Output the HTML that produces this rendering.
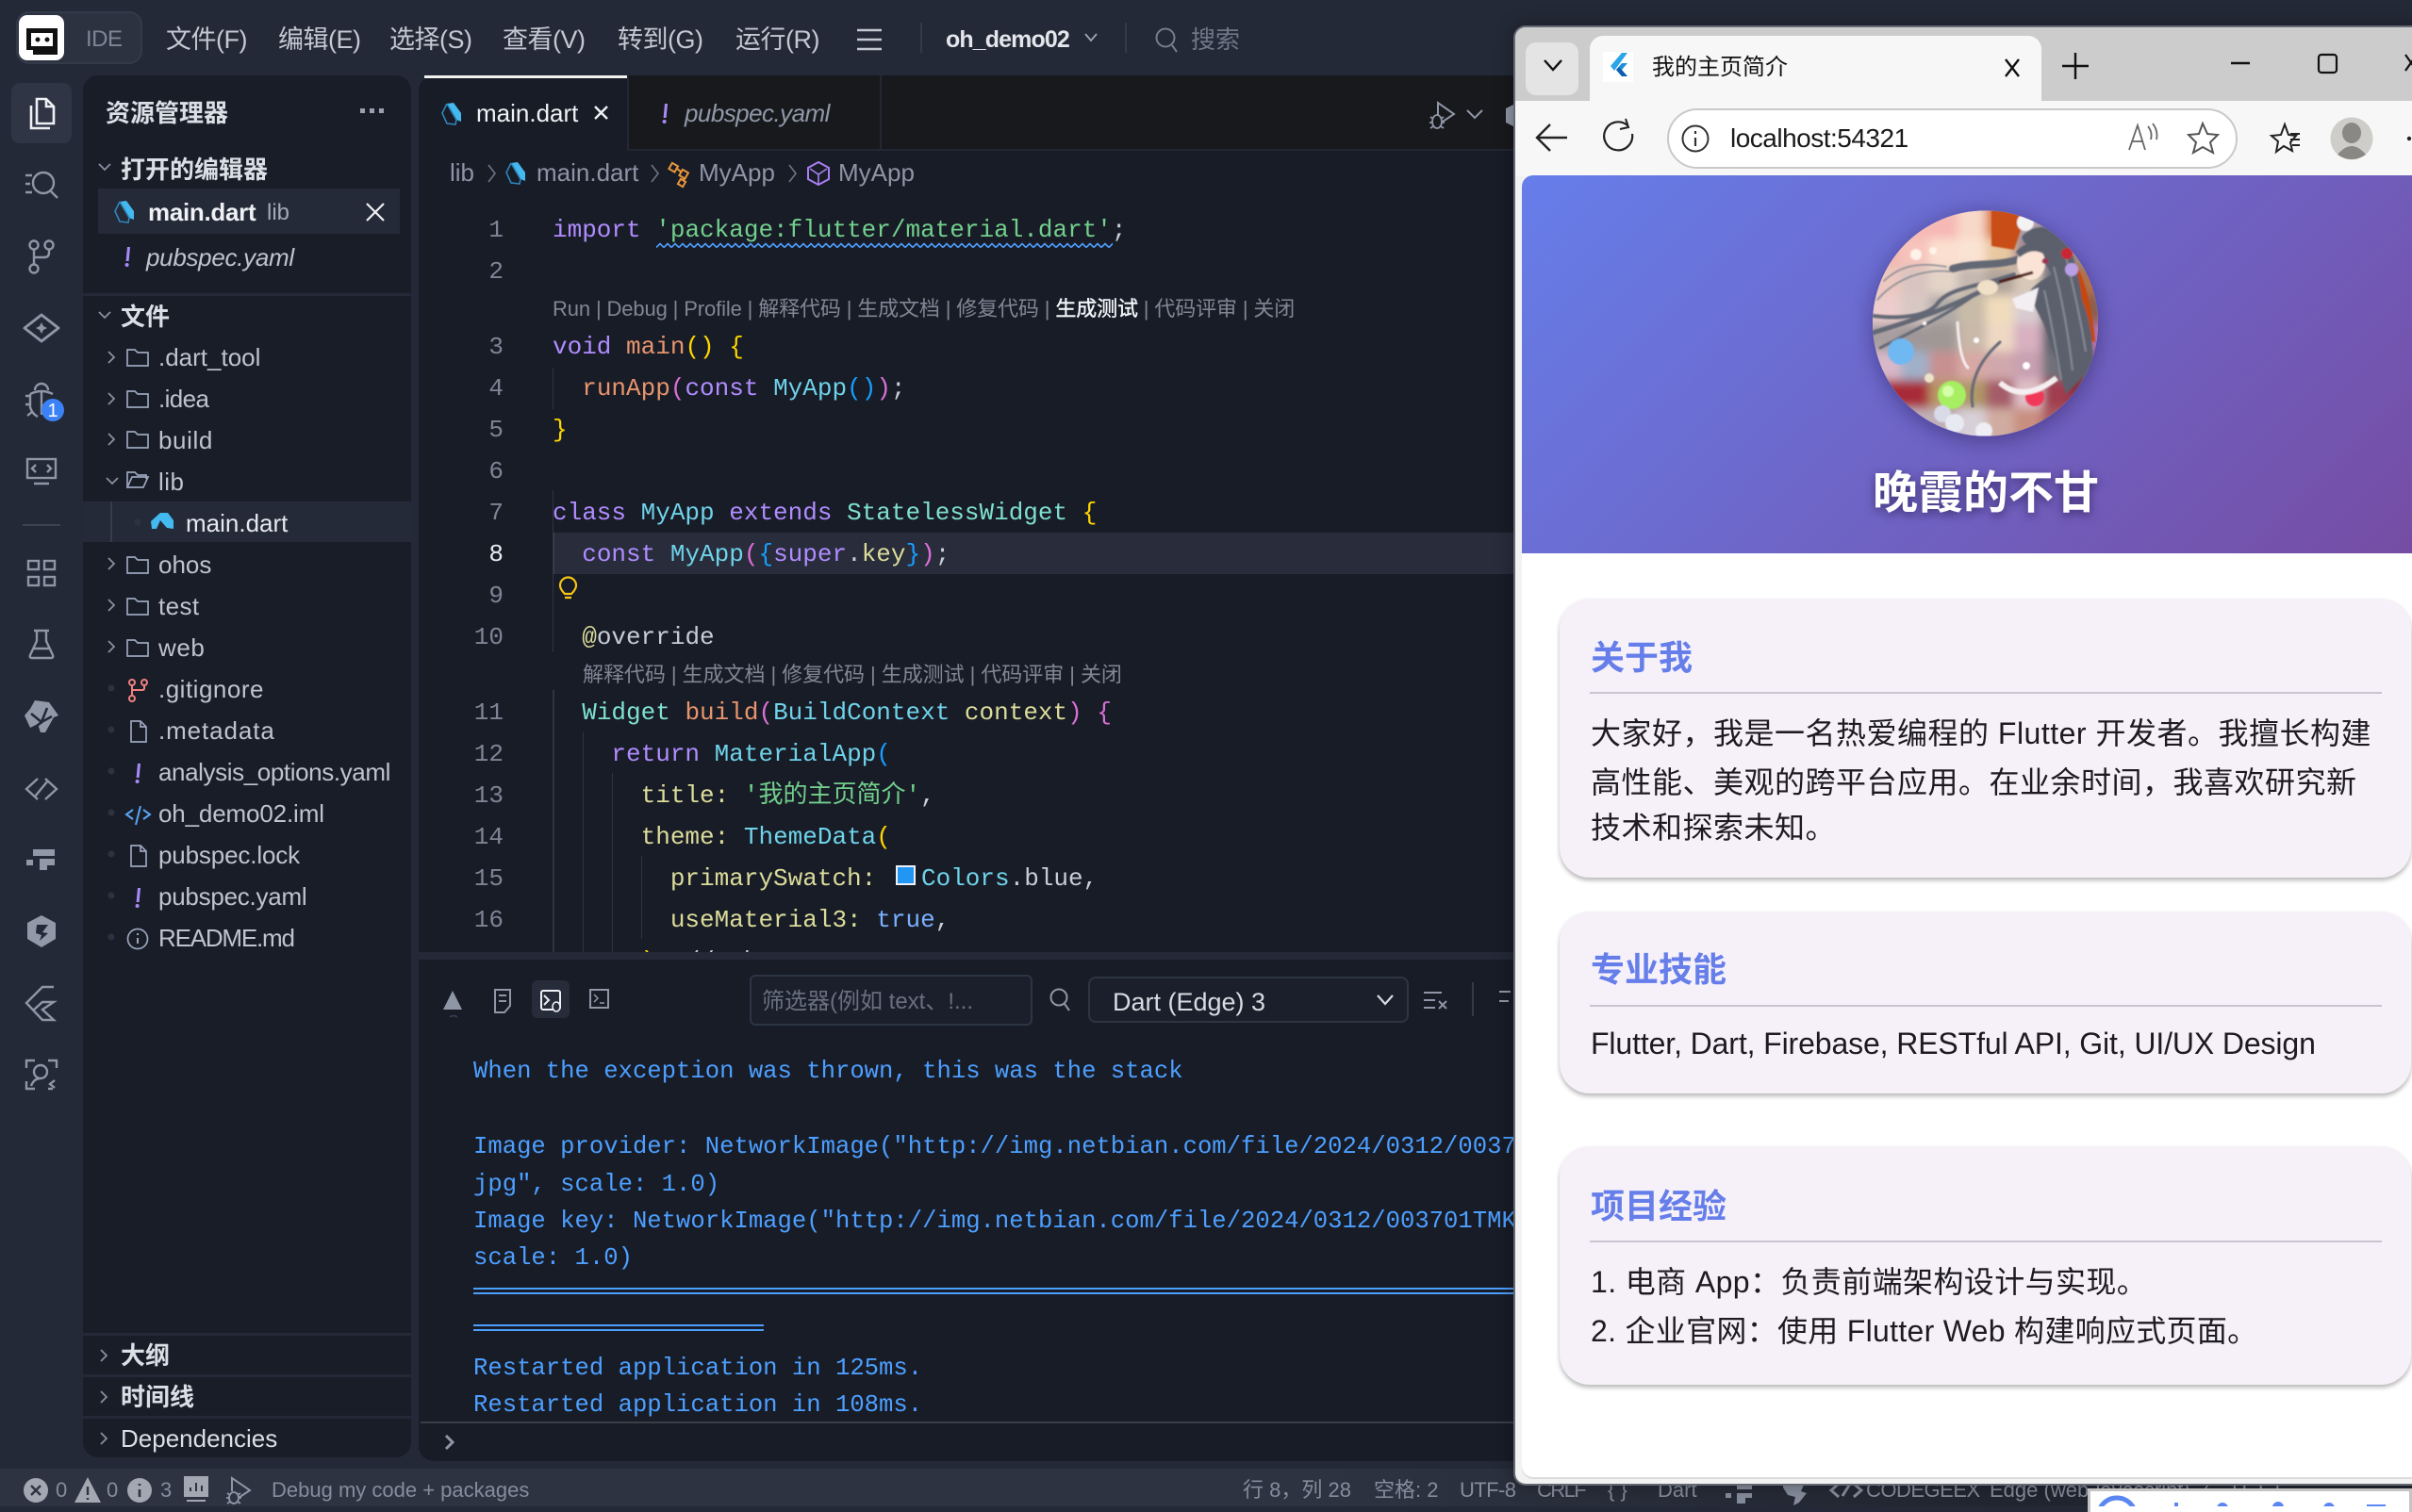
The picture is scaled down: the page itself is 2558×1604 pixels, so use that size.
<!DOCTYPE html>
<html lang="zh"><head><meta charset="utf-8"><title>IDE</title>
<style>
html,body{margin:0;padding:0;background:#232936}
body{position:relative;width:2558px;height:1598px;overflow:hidden;font-family:"Liberation Sans","Noto Sans CJK SC",sans-serif;color:#c0c4d0}
.a{position:absolute}
.t{position:absolute;line-height:0;white-space:pre;height:0}
.m{font-size:27px;letter-spacing:-.5px;color:#c4c8d2;top:42px}
.r{font-size:26px;color:#bfc3ce;left:168px}
.h{font-size:26px;font-weight:700;color:#dcdfe6}
.bc{font-size:26px;color:#8d94a5;top:183px}
.ln{font:26px/0 "Liberation Mono",monospace;color:#7d8595;left:480px;width:54px;text-align:right;margin-top:2px}
.c{font:26px/0 "Liberation Mono","Noto Sans CJK SC",monospace;color:#c8ccd6;margin-top:2px}
.lens{font-size:22px;color:#808694}
.o{font:25.6px/0 "Liberation Mono",monospace;color:#4d9fff;left:502px;margin-top:3px}
.st{font-size:22px;color:#858c9c;top:1581px}
.k{color:#b08cff}.s{color:#72cf8c}.f{color:#e8956d}.n{color:#6fd3ea}.tl{color:#7fe0d0}.y{color:#ffd700}.g{color:#da70d6}.b{color:#179fff}.v{color:#dcdc9a}.tr{color:#7ab0ff}
.card{position:absolute;left:1654px;width:903px;background:#f6f1f9;border-radius:32px;box-shadow:0 3px 5px rgba(0,0,0,.28)}
.ct{font-size:36px;font-weight:700;color:#667eea;left:1687px}
.dv{position:absolute;left:1686px;width:840px;height:2px;background:#cac4d0}
.bd{font-size:32px;color:#1d1b20;left:1687px;letter-spacing:.5px;font-family:"Liberation Sans","Noto Sans CJK SC",sans-serif}
</style></head><body>

<!-- panels -->
<div class="a" style="left:17px;top:12px;width:130px;height:52px;border:2px solid #333a4a;border-radius:14px;background:#2c3240"></div>
<div class="a" style="left:20px;top:16px;width:48px;height:48px;background:#fff;border-radius:9px"></div>
<div class="a" style="left:88px;top:80px;width:348px;height:1466px;background:#191d28;border-radius:16px"></div>
<div class="a" style="left:444px;top:80px;width:1200px;height:930px;background:#181c27;border-radius:16px 0 0 0"></div>
<div class="a" style="left:666px;top:80px;width:960px;height:78px;background:#18191c"></div>
<div class="a" style="left:666px;top:158px;width:960px;height:2px;background:#232733"></div>
<div class="a" style="left:665px;top:80px;width:2px;height:80px;background:#232733"></div>
<div class="a" style="left:933px;top:80px;width:2px;height:78px;background:#232733"></div>
<div class="a" style="left:450px;top:80px;width:215px;height:3px;background:#f2f2f2"></div>
<div class="a" style="left:444px;top:1018px;width:1200px;height:532px;background:#181c27;border-radius:0 0 0 16px"></div>
<div class="a" style="left:0;top:1558px;width:2558px;height:40px;background:linear-gradient(90deg,#2d3341 0,#2d3341 55%,#20252f 85%)"></div>

<!-- sidebar rects -->
<div class="a" style="left:12px;top:88px;width:64px;height:64px;background:#2f3545;border-radius:9px"></div>
<div class="a" style="left:104px;top:200px;width:320px;height:48px;background:#242a38"></div>
<div class="a" style="left:88px;top:311px;width:348px;height:3px;background:#232936"></div>
<div class="a" style="left:88px;top:532px;width:348px;height:43px;background:#242a38"></div>
<div class="a" style="left:117px;top:532px;width:2px;height:43px;background:#353c4c"></div>
<div class="a" style="left:88px;top:1414px;width:348px;height:3px;background:#232936"></div>
<div class="a" style="left:88px;top:1458px;width:348px;height:3px;background:#232936"></div>
<div class="a" style="left:88px;top:1502px;width:348px;height:3px;background:#232936"></div>

<!-- title bar text -->
<div class="t" style="left:91px;top:42px;font-size:24px;color:#7e8595;letter-spacing:-.5px">IDE</div>
<div class="t m" style="left:176px">文件(F)</div>
<div class="t m" style="left:295px">编辑(E)</div>
<div class="t m" style="left:413px">选择(S)</div>
<div class="t m" style="left:533px">查看(V)</div>
<div class="t m" style="left:655px">转到(G)</div>
<div class="t m" style="left:780px">运行(R)</div>
<div class="t" style="left:1003px;top:42px;font-size:25px;font-weight:700;color:#e4e6ec;letter-spacing:-.9px">oh_demo02</div>
<div class="t" style="left:1263px;top:42px;font-size:26px;color:#6f7686">搜索</div>

<!-- sidebar text -->
<div class="t h" style="left:112px;top:120px">资源管理器</div>
<div class="t h" style="left:128px;top:180px">打开的编辑器</div>
<div class="t" style="left:157px;top:225px;font-size:26px;font-weight:700;color:#f0f1f4;letter-spacing:-.3px">main.dart</div>
<div class="t" style="left:283px;top:226px;font-size:24px;color:#a4a9b6">lib</div>
<div class="t" style="left:155px;top:273px;font-size:26px;font-style:italic;color:#bfc3ce;letter-spacing:-.3px">pubspec.yaml</div>
<div class="t h" style="left:128px;top:336px">文件</div>
<div class="t r" style="top:379px">.dart_tool</div>
<div class="t r" style="top:423px;letter-spacing:-.6px">.idea</div>
<div class="t r" style="top:467px;letter-spacing:.6px">build</div>
<div class="t r" style="top:511px;letter-spacing:.5px">lib</div>
<div class="t r" style="top:555px;left:197px;color:#e6e8ee">main.dart</div>
<div class="t r" style="top:599px">ohos</div>
<div class="t r" style="top:643px;letter-spacing:.4px">test</div>
<div class="t r" style="top:687px;letter-spacing:.6px">web</div>
<div class="t r" style="top:731px;letter-spacing:.5px">.gitignore</div>
<div class="t r" style="top:775px;letter-spacing:.9px">.metadata</div>
<div class="t r" style="top:819px;letter-spacing:-.4px">analysis_options.yaml</div>
<div class="t r" style="top:863px;letter-spacing:-.15px">oh_demo02.iml</div>
<div class="t r" style="top:907px;letter-spacing:-.15px">pubspec.lock</div>
<div class="t r" style="top:951px;letter-spacing:-.25px">pubspec.yaml</div>
<div class="t r" style="top:995px;letter-spacing:-1.2px">README.md</div>
<div class="t h" style="left:128px;top:1438px">大纲</div>
<div class="t h" style="left:128px;top:1482px">时间线</div>
<div class="t" style="left:128px;top:1526px;font-size:26px;color:#dcdfe6">Dependencies</div>

<!-- tabs + breadcrumb -->
<div class="t" style="left:505px;top:120px;font-size:26px;color:#f0f1f4">main.dart</div>
<div class="t" style="left:726px;top:120px;font-size:26px;font-style:italic;color:#8f97a8;letter-spacing:-.55px">pubspec.yaml</div>
<div class="t bc" style="left:477px">lib</div>
<div class="t bc" style="left:569px">main.dart</div>
<div class="t bc" style="left:741px">MyApp</div>
<div class="t bc" style="left:889px">MyApp</div>

<!-- editor -->
<div class="a" style="left:586px;top:565px;width:1030px;height:44px;background:#282c3b"></div>
<div class="a" style="left:586px;top:390px;width:1px;height:44px;background:#2e3442"></div>
<div class="a" style="left:586px;top:565px;width:2px;height:44px;background:#3a4150"></div>
<div class="a" style="left:586px;top:520px;width:1px;height:172px;background:#2e3442"></div>
<div class="a" style="left:586px;top:732px;width:2px;height:278px;background:#2e3442"></div>
<div class="a" style="left:618px;top:776px;width:1px;height:234px;background:#2e3442"></div>
<div class="a" style="left:649px;top:820px;width:1px;height:190px;background:#2e3442"></div>
<div class="a" style="left:680px;top:908px;width:1px;height:88px;background:#2e3442"></div>

<div class="a" style="left:0;top:0;width:2558px;height:1598px;clip-path:inset(0 0 588px 0)">
<div class="t ln" style="top:242px">1</div>
<div class="t ln" style="top:286px">2</div>
<div class="t ln" style="top:366px">3</div>
<div class="t ln" style="top:410px">4</div>
<div class="t ln" style="top:454px">5</div>
<div class="t ln" style="top:498px">6</div>
<div class="t ln" style="top:542px">7</div>
<div class="t ln" style="top:586px;color:#e8eaf0">8</div>
<div class="t ln" style="top:630px">9</div>
<div class="t ln" style="top:674px">10</div>
<div class="t ln" style="top:754px">11</div>
<div class="t ln" style="top:798px">12</div>
<div class="t ln" style="top:842px">13</div>
<div class="t ln" style="top:886px">14</div>
<div class="t ln" style="top:930px">15</div>
<div class="t ln" style="top:974px">16</div>
<div class="t ln" style="top:1018px">17</div>

<div class="t c" style="left:586px;top:242px"><span class="k">import</span> <span class="s">'package:flutter/material.dart'</span>;</div>
<div class="t lens" style="left:586px;top:328px;letter-spacing:-.13px">Run | Debug | Profile | 解释代码 | 生成文档 | 修复代码 | <span style="color:#f2f4f8;-webkit-text-stroke:.4px #f2f4f8">生成测试</span> | 代码评审 | 关闭</div>
<div class="t c" style="left:586px;top:366px"><span class="k">void</span> <span class="f">main</span><span class="y">()</span> <span class="y">{</span></div>
<div class="t c" style="left:586px;top:410px">  <span class="f">runApp</span><span class="g">(</span><span class="k">const</span> <span class="n">MyApp</span><span class="b">()</span><span class="g">)</span>;</div>
<div class="t c" style="left:586px;top:454px"><span class="y">}</span></div>
<div class="t c" style="left:586px;top:542px"><span class="k">class</span> <span class="n">MyApp</span> <span class="k">extends</span> <span class="tl">StatelessWidget</span> <span class="y">{</span></div>
<div class="t c" style="left:586px;top:586px">  <span class="k">const</span> <span class="n">MyApp</span><span class="g">(</span><span class="b">{</span><span class="k">super</span>.<span class="v">key</span><span class="b">}</span><span class="g">)</span>;</div>
<div class="t c" style="left:586px;top:674px">  <span class="v">@</span>override</div>
<div class="t lens" style="left:618px;top:716px;letter-spacing:-.05px">解释代码 | 生成文档 | 修复代码 | 生成测试 | 代码评审 | 关闭</div>
<div class="t c" style="left:586px;top:754px">  <span class="tl">Widget</span> <span class="f">build</span><span class="g">(</span><span class="n">BuildContext</span> <span class="v">context</span><span class="g">)</span> <span class="g">{</span></div>
<div class="t c" style="left:586px;top:798px">    <span class="k">return</span> <span class="n">MaterialApp</span><span class="b">(</span></div>
<div class="t c" style="left:586px;top:842px">      <span class="v">title:</span> <span class="s">'我的主页简介'</span>,</div>
<div class="t c" style="left:586px;top:886px">      <span class="v">theme:</span> <span class="n">ThemeData</span><span class="y">(</span></div>
<div class="t c" style="left:586px;top:930px">        <span class="v">primarySwatch:</span></div>
<div class="a" style="left:950px;top:918px;width:17px;height:17px;background:#2196f3;border:2px solid #eef0f5"></div>
<div class="t c" style="left:977px;top:930px"><span class="n">Colors</span>.blue,</div>
<div class="t c" style="left:586px;top:974px">        <span class="v">useMaterial3:</span> <span class="tr">true</span>,</div>
<div class="t c" style="left:586px;top:1018px">      <span class="y">)</span>, // ThemeData</div>
</div>

<!-- panel toolbar -->
<div class="a" style="left:564px;top:1040px;width:40px;height:40px;background:#262c3a;border-radius:6px"></div>
<div class="a" style="left:795px;top:1034px;width:296px;height:50px;border:2px solid #2d3444;border-radius:6px;background:#1b1f2b"></div>
<div class="t" style="left:808px;top:1063px;font-size:24px;color:#687080">筛选器(例如 text、!...</div>
<div class="a" style="left:1154px;top:1036px;width:336px;height:45px;border:2px solid #2d3444;border-radius:8px;background:#1b1f2b"></div>
<div class="t" style="left:1180px;top:1063px;font-size:27px;color:#d8dbe2">Dart (Edge) 3</div>

<!-- output -->
<div class="t o" style="top:1134px">When the exception was thrown, this was the stack</div>
<div class="t o" style="top:1214px">Image provider: NetworkImage("http://img.netbian.com/file/2024/0312/003701TMKV4.</div>
<div class="t o" style="top:1254px">jpg", scale: 1.0)</div>
<div class="t o" style="top:1293px">Image key: NetworkImage("http://img.netbian.com/file/2024/0312/003701TMKV4.jpg",</div>
<div class="t o" style="top:1332px">scale: 1.0)</div>
<div class="a" style="left:502px;top:1366px;width:1110px;height:2px;background:#4d9fff"></div>
<div class="a" style="left:502px;top:1371px;width:1110px;height:2px;background:#4d9fff"></div>
<div class="a" style="left:502px;top:1405px;width:308px;height:2px;background:#4d9fff"></div>
<div class="a" style="left:502px;top:1410px;width:308px;height:2px;background:#4d9fff"></div>
<div class="t o" style="top:1449px">Restarted application in 125ms.</div>
<div class="t o" style="top:1488px">Restarted application in 108ms.</div>
<div class="a" style="left:446px;top:1508px;width:1170px;height:2px;background:#3a3e49"></div>

<!-- status text -->
<div class="t st" style="left:59px">0</div>
<div class="t st" style="left:113px">0</div>
<div class="t st" style="left:170px">3</div>
<div class="t st" style="left:288px">Debug my code + packages</div>
<div class="t st" style="left:1318px">行 8，列 28</div>
<div class="t st" style="left:1457px">空格: 2</div>
<div class="t st" style="left:1548px;letter-spacing:-.6px">UTF-8</div>
<div class="t st" style="left:1630px;letter-spacing:-1.6px">CRLF</div>
<div class="t st" style="left:1705px">{ }</div>
<div class="t st" style="left:1758px">Dart</div>
<div class="t st" style="left:1979px;letter-spacing:-.5px">CODEGEEX</div>
<div class="t st" style="left:2110px">Edge (web-javascript)</div>
<div class="t st" style="left:2330px;letter-spacing:8px">✓ UTF</div>

<!-- icons layer -->
<svg class="a" style="left:0;top:0" width="2558" height="1598" viewBox="0 0 2558 1598" fill="none">
<defs>
<g id="dart"><path d="M7 2 L14 1 L22 12 L22 21 L17 19 Z" fill="#44b9f0"/><path d="M7 2 L2 12 L7 23 L16 24 L17 19 L7 2" stroke="#2f86bc" stroke-width="1.6"/></g>
<g id="folder"><path d="M1 2h8l3 3h11v14H1z" stroke="#9aa5bd" stroke-width="1.7"/></g>
<g id="file"><path d="M2 1h10l6 6v16H2z M12 1v6h6" stroke="#9aa5bd" stroke-width="1.7"/></g>
<g id="cr"><path d="M1 1l6 6-6 6" stroke="#8a90a0" stroke-width="1.8"/></g>
<g id="cd"><path d="M1 1l6 6 6-6" stroke="#8a90a0" stroke-width="1.8"/></g>
<g id="ex"><path d="M5 1l-1.4 15h3L8 1z" fill="#a78bfa"/><circle cx="4.6" cy="20" r="2" fill="#a78bfa"/></g>
<g id="dot"><circle cx="6" cy="5" r="3.5" fill="#2c3240"/></g>
<g id="sep"><path d="M1 1l7 9-7 9" stroke="#6e7585" stroke-width="1.6"/></g>
<pattern id="wv" x="696" y="257" width="8" height="7" patternUnits="userSpaceOnUse"><path d="M0 5.500L4 1.500L8 5.500" stroke="#4d9fff" stroke-width="1.600"/></pattern>
</defs>

<!-- IDE logo -->
<rect x="28" y="30" width="33" height="23" fill="#111"/><rect x="33" y="35" width="23" height="14" fill="#fff"/><circle cx="40" cy="42" r="2.5" fill="#111"/><circle cx="50" cy="42" r="2.5" fill="#111"/><rect x="35" y="53" width="26" height="5" fill="#111"/>

<!-- hamburger & title bar -->
<path d="M909 32h26M909 42h26M909 52h26" stroke="#c4c8d2" stroke-width="2.4"/>
<path d="M977 24v32M1194 24v32" stroke="#343a49" stroke-width="2"/>
<path d="M1151 36l6 7 6-7" stroke="#a0a5b2" stroke-width="1.8"/>
<circle cx="1236" cy="40" r="9.5" stroke="#767d8d" stroke-width="2"/><path d="M1243 48l5 7" stroke="#767d8d" stroke-width="2"/>

<!-- activity bar -->
<g stroke="#eef0f4" stroke-width="2.6"><path d="M33 112v24h20"/><path d="M39 105h10l8 8v18H39z"/><path d="M49 105v8h8"/></g>
<g stroke="#8f96a6" stroke-width="2.4">
<path d="M27 186h7M27 195h5M27 204h7"/><circle cx="46" cy="194" r="11"/><path d="M54 203l7 7"/>
<circle cx="36" cy="260" r="4.5"/><circle cx="52" cy="260" r="4.5"/><circle cx="36" cy="285" r="4.5"/><path d="M36 265v15M52 265v3q0 5-5 5H36"/>
<path d="M44 334l18 14-18 14-18-14z" stroke-linejoin="round" stroke-width="3"/><path d="M44 342l2 4 4 2-4 2-2 4-2-4-4-2 4-2z" fill="#8f96a6" stroke="none"/>
<path d="M37 414a7 7 0 0 1 14 0M32 418q12-6 24 0M32 418v14q2 7 8 10M32 420h-5M32 429h-5M34 437l-5 4M44 416v24"/>
<rect x="29" y="487" width="30" height="20"/><path d="M38 493l-4 4 4 4M50 493l4 4-4 4M36 513h16"/>
<rect x="30" y="595" width="11" height="9"/><rect x="47" y="595" width="11" height="9"/><rect x="30" y="612" width="11" height="9"/><rect x="47" y="612" width="11" height="9"/>
<path d="M36 669h16M39 669v11l-7 15q-1 3 2 3h20q3 0 2-3l-7-15v-11M35 688h18"/>
<path d="M40 826l-12 11 12 11M48 826l12 11-12 11M37 845l14-17"/>
<path d="M57 1047H45L28 1064 45 1082H57L45 1071 57 1063H45L35 1072"/>
<path d="M28 1133v-8h9M51 1125h9v8M28 1147v8h9M51 1155h5"/><circle cx="43" cy="1137" r="7"/><path d="M33 1152q3-8 10-8M58 1146l-5 4 5 4"/>
</g>
<circle cx="56" cy="435" r="12" fill="#3b82f6"/>
<text x="56" y="442" font-size="20" fill="#fff" text-anchor="middle" font-family="Liberation Sans">1</text>
<rect x="24" y="556" width="40" height="2" fill="#3c4353"/>
<path d="M37 743L52 745 62 759 57 761 48 777 43 777 40 768 32 772 26 759 32 752Z" fill="#9199a8"/>
<path d="M33 757L44 766 50 751M44 766L55 760M44 766L38 771" stroke="#232936" stroke-width="2.600"/>
<path d="M35 901h23v7H35zM42 911h16v7H42zM42 918h8v5h-8zM28 912h7v6h-7z" fill="#9199a8"/>
<path d="M44 971l15 8v17l-15 9-15-9v-17z" fill="#9199a8"/><path d="M39 981h12l-6 8 6 1-9 8 2-6-6-2z" fill="#232936"/>

<!-- sidebar icons -->
<g fill="#9aa0ae"><rect x="382" y="115" width="5" height="5"/><rect x="392" y="115" width="5" height="5"/><rect x="402" y="115" width="5" height="5"/></g>
<use href="#cd" x="104" y="173"/>
<use href="#dart" x="120" y="212"/>
<path d="M389 216l18 18M407 216l-18 18" stroke="#f0f1f4" stroke-width="2.2"/>
<use href="#ex" x="130" y="261"/>
<use href="#cd" x="104" y="330"/>
<use href="#cr" x="114" y="372"/><use href="#folder" x="134" y="369"/>
<use href="#cr" x="114" y="416"/><use href="#folder" x="134" y="413"/>
<use href="#cr" x="114" y="459"/><use href="#folder" x="134" y="456"/>
<use href="#cd" x="112" y="506"/><path d="M135 517v-16h8l3 3h9v4M135 517l5-11h17l-5 11z" stroke="#9aa5bd" stroke-width="1.7"/>
<use href="#dot" x="140" y="549"/><path d="M160 553l10-9h8l6 8 0 9-7-1-7-8-4 9h-5z" fill="#44b9f0"/>
<use href="#cr" x="114" y="591"/><use href="#folder" x="134" y="589"/>
<use href="#cr" x="114" y="635"/><use href="#folder" x="134" y="633"/>
<use href="#cr" x="114" y="679"/><use href="#folder" x="134" y="677"/>
<use href="#dot" x="112" y="725"/><use href="#dot" x="112" y="769"/><use href="#dot" x="112" y="813"/><use href="#dot" x="112" y="857"/><use href="#dot" x="112" y="901"/><use href="#dot" x="112" y="945"/><use href="#dot" x="112" y="989"/>
<g stroke="#f08080" stroke-width="2"><circle cx="140" cy="724" r="3"/><circle cx="153" cy="724" r="3"/><circle cx="140" cy="741" r="3"/><path d="M140 727v11M153 727v3q0 2-2 2h-11"/></g>
<use href="#file" x="137" y="764"/>
<use href="#ex" x="141" y="809"/>
<path d="M141 859l-7 5 7 5M152 859l7 5-7 5M149 855l-5 20" stroke="#5aa5f5" stroke-width="2"/>
<use href="#file" x="137" y="896"/>
<use href="#ex" x="141" y="941"/>
<circle cx="146" cy="996" r="10.5" stroke="#9aa5bd" stroke-width="1.7"/><path d="M146 995v6M146 990v2" stroke="#9aa5bd" stroke-width="2"/>
<use href="#cr" x="106" y="1431"/><use href="#cr" x="106" y="1475"/><use href="#cr" x="106" y="1519"/>

<!-- tabs -->
<use href="#dart" x="467" y="108"/>
<path d="M631 113l13 13M644 113l-13 13" stroke="#f0f1f4" stroke-width="2.4"/>
<use href="#ex" x="700" y="109"/>
<path d="M1525 123v-14l17 12-12 8" stroke="#8f96a6" stroke-width="2"/>
<g stroke="#8f96a6" stroke-width="1.8"><ellipse cx="1524" cy="129" rx="5" ry="7"/><path d="M1517 124l3 2M1531 124l-3 2M1516 130h4M1528 130h4M1517 136l3-2M1531 136l-3-2"/></g>
<path d="M1556 117l8 8 8-8" stroke="#8f96a6" stroke-width="2"/>
<path d="M1607 110l-10 5v15l10 5z" fill="#8f96a6"/>

<!-- breadcrumb -->
<use href="#sep" x="517" y="174"/><use href="#dart" x="535" y="171"/><use href="#sep" x="690" y="174"/>
<g stroke="#e8963a" stroke-width="2"><rect x="711" y="174" width="7" height="7" transform="rotate(30 714 177)"/><rect x="722" y="181" width="7" height="7" transform="rotate(30 725 184)"/><rect x="720" y="191" width="6" height="6" transform="rotate(30 723 194)"/><path d="M717 178l6 5M725 188v4"/></g>
<use href="#sep" x="836" y="174"/>
<path d="M868 172l11 6v12l-11 6-11-6v-12z" stroke="#a980f0" stroke-width="2"/><path d="M859 179l9 6 9-6M868 185v10" stroke="#a980f0" stroke-width="1.6"/>

<!-- squiggle -->
<rect x="696" y="257" width="484" height="7" fill="url(#wv)"/>

<!-- bulb -->
<path d="M599 630q-5-5-5-9a8.500 8.500 0 0 1 17 0q0 4-5 9zM599 634h7" stroke="#f5c518" stroke-width="2.2"/>

<!-- panel icons -->
<path d="M480 1051l10 20h-20z" fill="#8f96a6"/>
<path d="M477 1079q4-3 8 0" stroke="#3a4050" stroke-width="1.500"/>
<g stroke="#8f96a6" stroke-width="2"><path d="M525 1050h16v17l-6 7h-10zM529 1056h8M529 1062h8"/>
<rect x="626" y="1050" width="19" height="19"/><path d="M630 1055l4 4-4 4M636 1064h5" stroke-width="1.500"/>
<circle cx="1123" cy="1058" r="8.500"/><path d="M1129 1065l5 7"/>
<path d="M1510 1053h19M1510 1061h12M1510 1069h12M1526 1062l8 8M1534 1062l-8 8"/></g>
<g stroke="#eef0f4" stroke-width="2"><rect x="574" y="1051" width="20" height="20" rx="2"/><path d="M577 1056l5 5-5 5"/></g><g stroke="#eef0f4" stroke-width="1.600"><ellipse cx="590" cy="1068" rx="4" ry="5" fill="#262c3a"/></g>
<path d="M1461 1056l8 9 8-9" stroke="#d8dbe2" stroke-width="2.200"/>
<path d="M1562 1042v36" stroke="#343a49" stroke-width="2"/>
<path d="M1590 1052h12M1590 1062h10" stroke="#8f96a6" stroke-width="2"/>
<path d="M473 1523l7 7-7 7" stroke="#8f96a6" stroke-width="3"/>

<!-- status icons -->
<circle cx="38" cy="1581" r="13" fill="#a3a7b2"/><path d="M33 1576l10 10M43 1576l-10 10" stroke="#2d3341" stroke-width="2.400"/>
<path d="M93 1567l14 27H79z" fill="#a3a7b2"/><path d="M93 1577v9M93 1589v2" stroke="#2d3341" stroke-width="2.400"/>
<circle cx="148" cy="1581" r="13" fill="#a3a7b2"/><path d="M148 1580v8M148 1574v2" stroke="#2d3341" stroke-width="2.600"/>
<rect x="195" y="1566" width="26" height="22" fill="#a3a7b2"/><path d="M202 1582v-4M208 1582v-9M214 1582v-6" stroke="#2d3341" stroke-width="2"/><path d="M198 1592h20" stroke="#a3a7b2" stroke-width="2"/>
<path d="M246 1582v-14l19 13-12 8" stroke="#8f96a6" stroke-width="2"/>
<g stroke="#8f96a6" stroke-width="1.800"><ellipse cx="248" cy="1589" rx="5" ry="6"/><path d="M241 1584l3 2M255 1584l-3 2M240 1589h4M252 1589h4M241 1595l3-2M255 1595l-3-2"/></g>
<g fill="#858c9c"><rect x="1842" y="1574" width="16" height="6"/><rect x="1830" y="1584" width="6" height="5"/><rect x="1842" y="1584" width="16" height="5"/><rect x="1842" y="1589" width="9" height="6"/></g>
<path d="M1891 1572l12 2 11-1-4 9 6 2-8 10-6 3 2-9-8-2-5-8z" fill="#858c9c"/>
<path d="M1950 1574l-8 7 8 7M1966 1574l8 7-8 7M1954 1587l8-13" stroke="#858c9c" stroke-width="3"/>
</svg>

<!-- BROWSER -->
<div class="a" style="left:1607px;top:29px;width:958px;height:1545px;background:#f2f2f2;border-radius:11px 0 0 11px;box-shadow:0 0 0 2px #646974,0 0 20px rgba(0,0,0,.4)"></div>
<div class="a" style="left:1607px;top:29px;width:958px;height:78px;background:#cdcccd;border-radius:11px 0 0 0"></div>
<div class="a" style="left:1607px;top:107px;width:958px;height:80px;background:#f7f7f7"></div>
<div class="a" style="left:1618px;top:45px;width:56px;height:56px;background:#e4e4e4;border-radius:11px"></div>
<div class="a" style="left:1686px;top:38px;width:479px;height:69px;background:#f7f7f7;border-radius:14px 14px 0 0"></div>
<div class="a" style="left:1700px;top:55px;width:32px;height:32px;background:#fff"></div>
<div class="t" style="left:1752px;top:72px;font-size:24px;color:#111">我的主页简介</div>
<div class="a" style="left:1768px;top:115px;width:601px;height:60px;background:#fff;border:2px solid #c9c9c9;border-radius:32px"></div>
<div class="t" style="left:1835px;top:147px;font-size:28px;color:#1a1a1a;letter-spacing:-.5px">localhost:54321</div>

<svg class="a" style="left:1605px;top:27px" width="953" height="162" viewBox="1605 27 953 162" fill="none">
<path d="M1638 64l9 10 9-10" stroke="#111" stroke-width="2.400"/>
<path d="M1720 56l-12 14 4 5 14-19z" fill="#2ba4e8"/><path d="M1720 67l-6 7 6 7h6l-6-7 6-7z" fill="#1f8fdc"/><path d="M1720 81l-6-7 3-3 9 10z" fill="#0b5fb0"/>
<path d="M2127 63l14 18M2141 63l-14 18" stroke="#111" stroke-width="2.400"/>
<path d="M2201 56v28M2187 70h28" stroke="#111" stroke-width="2.400"/>
<path d="M2366 67h20" stroke="#111" stroke-width="2.400"/>
<rect x="2459" y="58" width="19" height="19" rx="3" stroke="#111" stroke-width="2.200"/>
<path d="M2551 58l12 17M2563 58l-12 17" stroke="#111" stroke-width="2.200"/>
<path d="M1662 146h-31M1644 132l-14 14 14 14" stroke="#222" stroke-width="2.400"/>
<path d="M1726 133a15 15 0 1 0 5 9" stroke="#222" stroke-width="2.200"/><path d="M1724 126l3 9-9 2" stroke="#222" stroke-width="2"/>
<circle cx="1798" cy="147" r="13.500" stroke="#333" stroke-width="2"/><path d="M1798 146v9M1798 139v3" stroke="#333" stroke-width="2.200"/>
<path d="M2258 159l9-26 8 26M2262 150h10M2278 134q5 6 3 14M2283 131q6 8 4 17" stroke="#666" stroke-width="1.800"/>
<path d="M2336 131l5 11 11 1-8 8 3 11-11-6-10 6 3-11-8-8 11-1z" stroke="#555" stroke-width="2"/>
<path d="M2423 132l4 11 8 1-6 7 2 9-9-5-8 6 2-11-7-6 10-1z" stroke="#222" stroke-width="2"/><path d="M2429 148h10M2431 154h8M2429 142h10" stroke="#222" stroke-width="2"/>
<circle cx="2494" cy="147" r="22.500" fill="#cfcdc9"/><ellipse cx="2494" cy="141" rx="10" ry="11" fill="#8a8885"/><path d="M2479 164q15-18 30 0q-15 10-30 0z" fill="#8a8885"/>
<circle cx="2555" cy="147" r="2.200" fill="#222"/>
</svg>

<!-- web page -->
<div class="a" style="left:1614px;top:186px;width:944px;height:1381px;background:#fff;border-radius:12px 0 0 12px;overflow:hidden;box-shadow:0 2px 0 #dcdcdc">
<div class="a" style="left:0;top:0;width:983px;height:401px;background:linear-gradient(135deg,#667eea,#764ba2)"></div>
</div>

<div class="a" style="left:1986px;top:223px;width:239px;height:240px;border-radius:50%;box-shadow:0 4px 22px rgba(20,10,60,.4)"></div>
<svg class="a" style="left:1986px;top:223px" width="239" height="240" viewBox="0 0 239 240">
<defs><clipPath id="av"><circle cx="119.500" cy="120" r="119.500"/></clipPath><filter id="bl" x="-5%" y="-5%" width="110%" height="110%"><feGaussianBlur stdDeviation="5"/></filter><filter id="bl2"><feGaussianBlur stdDeviation=".7"/></filter></defs>
<g clip-path="url(#av)">
<rect width="239" height="240" fill="#e8c4bc"/>
<g filter="url(#bl)">
<rect x="0" y="-10" width="91" height="41" fill="#f6b8b4"/><rect x="90" y="-10" width="31" height="41" fill="#f8d8c8"/><rect x="120" y="-10" width="31" height="41" fill="#d9773a"/><rect x="150" y="-10" width="31" height="41" fill="#b0a0a8"/><rect x="180" y="-10" width="70" height="41" fill="#707080"/>
<rect x="0" y="30" width="61" height="31" fill="#f4b8b0"/><rect x="30" y="30" width="31" height="31" fill="#f6c4bc"/><rect x="60" y="30" width="31" height="31" fill="#fbdfcf"/><rect x="90" y="30" width="31" height="31" fill="#fbe3d3"/><rect x="120" y="30" width="31" height="31" fill="#e8c8a0"/><rect x="150" y="30" width="31" height="31" fill="#a08890"/><rect x="180" y="30" width="31" height="31" fill="#a09098"/><rect x="210" y="30" width="40" height="31" fill="#a08878"/>
<rect x="-10" y="60" width="41" height="31" fill="#ecc8c0"/><rect x="30" y="60" width="31" height="31" fill="#d8c4c0"/><rect x="60" y="60" width="31" height="31" fill="#e4d4c8"/><rect x="90" y="60" width="31" height="31" fill="#c4b8b0"/><rect x="120" y="60" width="31" height="31" fill="#b0a49c"/><rect x="150" y="60" width="31" height="31" fill="#d8c8b8"/><rect x="180" y="60" width="31" height="31" fill="#6c6c78"/><rect x="210" y="60" width="40" height="31" fill="#b07048"/>
<rect x="-10" y="90" width="41" height="31" fill="#eccccc"/><rect x="30" y="90" width="31" height="31" fill="#d8c8c4"/><rect x="60" y="90" width="31" height="31" fill="#b0aaa8"/><rect x="90" y="90" width="31" height="31" fill="#c8bca8"/><rect x="120" y="90" width="31" height="31" fill="#f0dcbc"/><rect x="150" y="90" width="31" height="31" fill="#d8ccd0"/><rect x="180" y="90" width="31" height="31" fill="#606470"/><rect x="210" y="90" width="40" height="31" fill="#8c6050"/>
<rect x="-10" y="120" width="41" height="31" fill="#a89ea0"/><rect x="30" y="120" width="31" height="31" fill="#a09898"/><rect x="60" y="120" width="31" height="31" fill="#a09896"/><rect x="90" y="120" width="31" height="31" fill="#c8b8a8"/><rect x="120" y="120" width="31" height="31" fill="#eed8c4"/><rect x="150" y="120" width="31" height="31" fill="#d8b0c0"/><rect x="180" y="120" width="31" height="31" fill="#5c606c"/><rect x="210" y="120" width="40" height="31" fill="#b070a8"/>
<rect x="-10" y="150" width="41" height="31" fill="#d8b8c8"/><rect x="30" y="150" width="31" height="31" fill="#a0b0c8"/><rect x="60" y="150" width="31" height="31" fill="#c89090"/><rect x="90" y="150" width="31" height="31" fill="#d8a8a4"/><rect x="120" y="150" width="31" height="31" fill="#d0a8ac"/><rect x="150" y="150" width="31" height="31" fill="#c8a0b0"/><rect x="180" y="150" width="31" height="31" fill="#707078"/><rect x="210" y="150" width="40" height="31" fill="#606068"/>
<rect x="-10" y="180" width="71" height="31" fill="#a82c38"/><rect x="60" y="180" width="31" height="31" fill="#b89868"/><rect x="90" y="180" width="31" height="31" fill="#b09868"/><rect x="120" y="180" width="31" height="31" fill="#a45c68"/><rect x="150" y="180" width="31" height="31" fill="#e0c0c8"/><rect x="180" y="180" width="31" height="31" fill="#a03c50"/><rect x="210" y="180" width="40" height="31" fill="#803040"/>
<rect x="-10" y="210" width="101" height="40" fill="#c0b0b8"/><rect x="90" y="210" width="31" height="40" fill="#d8d0d8"/><rect x="120" y="210" width="31" height="40" fill="#d0aca0"/><rect x="150" y="210" width="31" height="40" fill="#c88e80"/><rect x="180" y="210" width="60" height="40" fill="#a85860"/>
</g>
<g filter="url(#bl2)">
<path d="M126 0h34v12l-10 30-24-4z" fill="#c84d12"/>
<path d="M218 62q14 30 18 78l-12-4-10-50z" fill="#c64610"/>
<circle cx="46" cy="47" r="6" fill="#fff7f0" opacity=".9"/><circle cx="64" cy="43" r="4" fill="#fff7f0" opacity=".8"/>
<g stroke="#646874" fill="none" stroke-linecap="round">
<path d="M155 52C130 60 110 55 85 62" stroke-width="8"/>
<path d="M150 68C110 82 80 82 68 100 58 112 30 116 0 112" stroke-width="4"/>
<path d="M140 72C100 96 60 112 0 130" stroke-width="5"/>
<path d="M105 92C80 110 40 130 8 146" stroke-width="3"/>
<path d="M78 60C50 55 30 58 12 75" stroke-width="1.500" stroke="#848890"/>
<path d="M82 65C55 62 25 72 5 95" stroke-width="1.500" stroke="#848890"/>
<path d="M135 140C112 160 102 185 106 208" stroke-width="3"/>
</g>
<path d="M158 28Q176 8 205 28Q218 60 222 95Q236 130 232 165L205 195Q192 150 182 122L165 88Q172 78 190 68L172 40Q160 38 158 28Z" fill="#5c606d"/>
<g stroke="#868a95" stroke-width="2" fill="none"><path d="M192 60Q205 110 212 170"/><path d="M205 50Q218 100 226 150"/><path d="M182 85Q190 120 200 180"/></g>
<ellipse cx="168" cy="56" rx="15" ry="18" fill="#fbe4d6"/>
<path d="M152 44Q168 26 188 46L184 48Q170 38 156 50Z" fill="#5c606d"/>
<ellipse cx="183" cy="54" rx="3.500" ry="3" fill="#9c3050"/>
<path d="M134 76L170 66" stroke="#4a1f12" stroke-width="3"/>
<ellipse cx="122" cy="82" rx="11" ry="8" fill="#f1e0c8"/>
<circle cx="162" cy="13" r="9" fill="#f5f2f4"/>
<circle cx="206" cy="46" r="6" fill="#c82830"/>
<circle cx="211" cy="63" r="7" fill="#b9a0e6"/>
<path d="M148 94L176 82L170 108L152 104Z" fill="#f3eef2"/>
<circle cx="30" cy="150" r="14" fill="#70b8f2"/>
<circle cx="84" cy="196" r="15" fill="#a6ee62"/><circle cx="80" cy="192" r="6" fill="#d4ffa8"/>
<circle cx="172" cy="198" r="10" fill="#f03858"/>
<circle cx="74" cy="216" r="9" fill="#d8dae8"/><circle cx="87" cy="226" r="10" fill="#e8eaf2"/><circle cx="118" cy="234" r="9" fill="#eeeef4"/>
<circle cx="60" cy="178" r="5" fill="#ece4c8"/><circle cx="110" cy="138" r="3" fill="#fff"/><circle cx="163" cy="165" r="4" fill="#fff"/><circle cx="55" cy="120" r="2" fill="#fff"/>
<path d="M135 183Q160 205 195 178" stroke="#f5eff2" stroke-width="6" fill="none"/>
<path d="M90 118Q92 160 102 168" stroke="#f5eff2" stroke-width="3" fill="none"/>
</g></g>
</svg>
<div class="t" style="left:1986px;top:524px;font-size:48px;font-weight:700;color:#fff;text-shadow:0 3px 10px rgba(20,10,50,.55)">晚霞的不甘</div>

<div class="card" style="top:635px;height:296px"></div>
<div class="t ct" style="top:698px">关于我</div>
<div class="dv" style="top:734px"></div>
<div class="t bd" style="top:778px">大家好，我是一名热爱编程的 Flutter 开发者。我擅长构建</div>
<div class="t bd" style="top:830px">高性能、美观的跨平台应用。在业余时间，我喜欢研究新</div>
<div class="t bd" style="top:878px">技术和探索未知。</div>

<div class="card" style="top:967px;height:193px"></div>
<div class="t ct" style="top:1029px">专业技能</div>
<div class="dv" style="top:1066px"></div>
<div class="t bd" style="top:1107px;letter-spacing:-.12px">Flutter, Dart, Firebase, RESTful API, Git, UI/UX Design</div>

<div class="card" style="top:1216px;height:253px"></div>
<div class="t ct" style="top:1280px">项目经验</div>
<div class="dv" style="top:1316px"></div>
<div class="t bd" style="top:1360px;letter-spacing:.4px">1. 电商 App：负责前端架构设计与实现。</div>
<div class="t bd" style="top:1412px;letter-spacing:.3px">2. 企业官网：使用 Flutter Web 构建响应式页面。</div>

<!-- bottom-right corner picture -->
<div class="a" style="left:2214px;top:1579px;width:338px;height:22px;background:#fff;border:3px solid #c4c4c4;border-bottom:0"></div>
<svg class="a" style="left:2214px;top:1582px" width="344" height="16" viewBox="2214 1582 344 16" fill="none">
<circle cx="2245" cy="1609" r="20" stroke="#5b86f2" stroke-width="5"/>
<g fill="#5b86f2"><rect x="2306" y="1594" width="4" height="4"/><circle cx="2357" cy="1600" r="6"/><circle cx="2416" cy="1599" r="6"/><circle cx="2470" cy="1600" r="6"/><rect x="2510" y="1596" width="20" height="2"/></g>
</svg>
</body></html>
